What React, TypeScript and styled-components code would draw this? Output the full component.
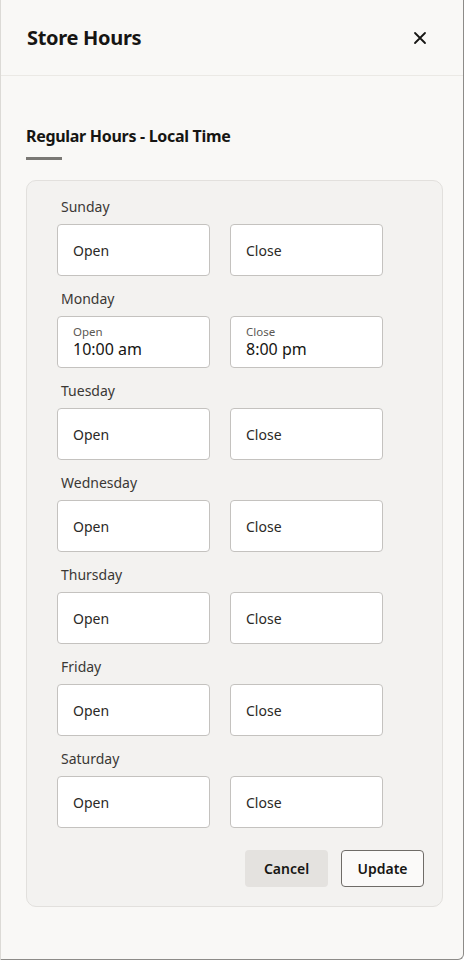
import { useState } from 'react';
import styled, { createGlobalStyle } from 'styled-components';

const GlobalStyle = createGlobalStyle`
  body {
    margin: 0;
    background: #ffffff;
    font-family: 'Noto Sans', 'Liberation Sans', sans-serif;
    color: #161513;
  }
`;

interface DayHours {
  day: string;
  open?: string;
  close?: string;
}

const initialHours: DayHours[] = [
  { day: 'Sunday' },
  { day: 'Monday', open: '10:00 am', close: '8:00 pm' },
  { day: 'Tuesday' },
  { day: 'Wednesday' },
  { day: 'Thursday' },
  { day: 'Friday' },
  { day: 'Saturday' }
];

const TimeField = ({ label, value }: { label: string; value?: string }) => {
  if (!value) {
    return (
      <Field>
        <Placeholder>{label}</Placeholder>
      </Field>
    );
  }
  return (
    <Field>
      <SmallLabel>{label}</SmallLabel>
      <Value>{value}</Value>
    </Field>
  );
};

const App = () => {
  const [hours] = useState<DayHours[]>(initialHours);

  return (
    <>
      <GlobalStyle />
      <Dialog>
        <Header>
          <Title>Store Hours</Title>
          <CloseButton aria-label='Close'>
            <svg width='14' height='14' viewBox='0 0 14 14'>
              <path
                d='M2 2 L12 12 M12 2 L2 12'
                stroke='#161513'
                strokeWidth='1.8'
                strokeLinecap='round'
              />
            </svg>
          </CloseButton>
        </Header>
        <Body>
          <SectionTitle>Regular Hours - Local Time</SectionTitle>
          <TitleBar />
          <Card>
            {hours.map(h => (
              <DayRow key={h.day}>
                <DayLabel>{h.day}</DayLabel>
                <Fields>
                  <TimeField label='Open' value={h.open} />
                  <TimeField label='Close' value={h.close} />
                </Fields>
              </DayRow>
            ))}
            <Actions>
              <Button>Cancel</Button>
              <Button $outlined>Update</Button>
            </Actions>
          </Card>
        </Body>
      </Dialog>
    </>
  );
};

const Dialog = styled.div`
  width: 464px;
  height: 960px;
  background: #f9f8f6;
  border-left: 1px solid #dcdad6;
  border-right: 1px solid #8d8b88;
  border-bottom: 1px solid #8d8b88;
  border-bottom-right-radius: 6px;
  box-sizing: border-box;
`;
const Header = styled.div`
  height: 76px;
  display: flex;
  align-items: center;
  justify-content: space-between;
  padding: 0 36px 0 26px;
  border-bottom: 1px solid #ebe9e5;
  box-sizing: border-box;
`;
const Title = styled.h1`
  margin: 0;
  font-size: 20px;
  font-weight: 700;
  letter-spacing: -0.3px;
  color: #161513;
`;
const CloseButton = styled.button`
  border: none;
  background: transparent;
  padding: 0;
  width: 14px;
  height: 14px;
  display: flex;
  cursor: pointer;
`;
const Body = styled.div`
  padding: 49px 20px 0 25px;
`;
const SectionTitle = styled.h2`
  margin: 0;
  font-size: 16px;
  line-height: 22px;
  font-weight: 700;
  letter-spacing: -0.3px;
  color: #161513;
`;
const TitleBar = styled.div`
  width: 36px;
  height: 3px;
  background: #7a7874;
  margin-top: 10px;
`;
const Card = styled.div`
  margin-top: 20px;
  width: 417px;
  box-sizing: border-box;
  background: #f3f2f0;
  border: 1px solid #e2e0dd;
  border-radius: 10px;
  padding: 15px 18px 19px 30px;
`;
const DayRow = styled.div`
  display: flex;
  flex-direction: column;
  gap: 7px;
  margin-bottom: 12px;
`;
const DayLabel = styled.div`
  font-size: 14px;
  line-height: 21px;
  padding-left: 4px;
  color: #3b3835;
`;
const Fields = styled.div`
  display: grid;
  grid-template-columns: 153px 153px;
  column-gap: 20px;
`;
const Field = styled.div`
  height: 52px;
  box-sizing: border-box;
  background: #ffffff;
  border: 1px solid #c4c2bf;
  border-radius: 4px;
  padding: 0 15px;
  display: flex;
  flex-direction: column;
  justify-content: center;
`;
const Placeholder = styled.span`
  font-size: 14px;
  color: #2b2926;
`;
const SmallLabel = styled.span`
  font-size: 11.5px;
  line-height: 14px;
  color: #5b5853;
`;
const Value = styled.span`
  font-size: 16px;
  line-height: 20px;
  color: #161513;
`;
const Actions = styled.div`
  display: flex;
  justify-content: flex-end;
  gap: 13px;
  margin-top: 22px;
`;
const Button = styled.button<{ $outlined?: boolean }>`
  width: 83px;
  height: 37px;
  border-radius: 4px;
  font-family: inherit;
  font-size: 14px;
  font-weight: 600;
  color: #161513;
  cursor: pointer;
  background: ${p => (p.$outlined ? '#fbfaf9' : '#e4e2df')};
  border: 1px solid ${p => (p.$outlined ? '#6f6c68' : 'transparent')};
`;

export default App;
